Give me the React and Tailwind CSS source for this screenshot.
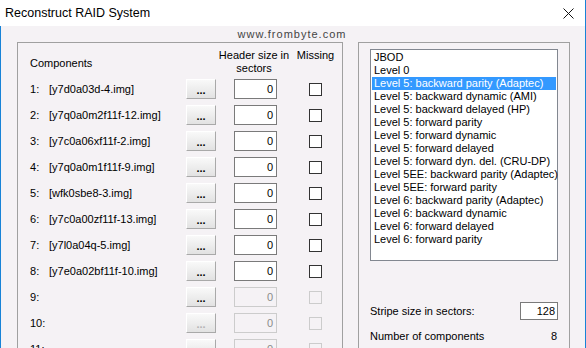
import React from 'react'

const FILES = [
  'y7d0a03d-4.img',
  'y7q0a0m2f11f-12.img',
  'y7c0a06xf11f-2.img',
  'y7q0a0m1f11f-9.img',
  'wfk0sbe8-3.img',
  'y7c0a00zf11f-13.img',
  'y7l0a04q-5.img',
  'y7e0a02bf11f-10.img',
]

const LEVELS = [
  'JBOD',
  'Level 0',
  'Level 5: backward parity (Adaptec)',
  'Level 5: backward dynamic (AMI)',
  'Level 5: backward delayed (HP)',
  'Level 5: forward parity',
  'Level 5: forward dynamic',
  'Level 5: forward delayed',
  'Level 5: forward dyn. del. (CRU-DP)',
  'Level 5EE: backward parity (Adaptec)',
  'Level 5EE: forward parity',
  'Level 6: backward parity (Adaptec)',
  'Level 6: backward dynamic',
  'Level 6: forward delayed',
  'Level 6: forward parity',
]

function DotsButton({ disabled }) {
  return (
    <div className="w-[30px] h-[20px] flex items-end justify-center pb-[3px] border border-t-white border-l-white border-r-[#a9a9a9] border-b-[#a9a9a9] bg-gradient-to-b from-[#f9f9f9] to-[#e2e2e2]">
      <span className={`text-[11px] leading-[9px] font-bold tracking-[0px] ${disabled ? 'text-[#b4b4b4]' : 'text-black'}`}>...</span>
    </div>
  )
}

function ComponentRow({ n, file, active, buttonOn }) {
  return (
    <div className="flex items-center h-[26px]">
      <span className="w-[19px]">{n}:</span>
      <span className="w-[137px] whitespace-nowrap">{file ? `[${file}]` : ''}</span>
      <DotsButton disabled={!buttonOn} />
      <div
        className={`ml-[18px] w-[43px] h-[20px] flex items-center justify-end pr-[3px] border ${
          active ? 'bg-white border-[#7a7a7a] text-black' : 'border-[#cccccc] text-[#8a8a8a]'
        }`}
      >
        0
      </div>
      <div className={`ml-[32px] w-[13px] h-[13px] border ${active ? 'bg-white border-[#333333]' : 'border-[#cccccc]'}`} />
    </div>
  )
}

export default function App() {
  const rows = Array.from({ length: 12 }, (_, i) => i + 1)

  return (
    <div className="w-[586px] h-[348px] overflow-hidden bg-[#f5f2f5] text-[11px] leading-[13px] text-black font-['Liberation_Sans',Arial,sans-serif] flex flex-col border-r border-[#1883d7]">
      {/* title bar */}
      <div className="h-[26px] shrink-0 bg-white flex items-center pl-[5px] pr-[11px]">
        <span className="text-[12.5px]">Reconstruct RAID System</span>
        <svg className="ml-auto" width="11" height="11" viewBox="0 0 11 11">
          <path d="M0.5 0.5 L10.5 10.5 M10.5 0.5 L0.5 10.5" stroke="#111" strokeWidth="1" fill="none" />
        </svg>
      </div>

      <div className="flex-1 flex flex-col border-l border-[#1883d7]">
        <div className="h-[16px] shrink-0 flex items-center justify-center pr-[2px] text-[#444] tracking-[1px]">
          www.frombyte.com
        </div>

        <div className="flex items-start">
          {/* components group */}
          <div className="ml-[16px] w-[326px] h-[320px] border border-[#a0a0a0] pl-[12px]">
            <div className="h-[33px] flex items-start">
              <span className="w-[184px] mt-[14px]">Components</span>
              <div className="w-[80px] mt-[6px] text-center">
                Header size in
                <br />
                sectors
              </div>
              <div className="w-[43px] mt-[6px] text-center">Missing</div>
            </div>
            {rows.map((n) => (
              <ComponentRow key={n} n={n} file={FILES[n - 1]} active={n <= 8} buttonOn={n <= 9} />
            ))}
          </div>

          {/* raid type group */}
          <div className="ml-[15px] w-[212px] h-[320px] border border-[#a0a0a0] pl-[11px] pr-[11px] pt-[6px]">
            <div className="w-[188px] h-[212px] bg-white border border-[#828790] py-[1px] px-[1px]">
              {LEVELS.map((l, i) => (
                <div
                  key={l}
                  className={`h-[13px] leading-[13px] pl-[2px] whitespace-nowrap ${i === 2 ? 'bg-[#3399ff] text-white' : ''}`}
                >
                  {l}
                </div>
              ))}
            </div>

            <div className="mt-[41px] h-[18px] flex items-center">
              <span>Stripe size in sectors:</span>
              <div className="ml-auto w-[38px] h-[18px] bg-white border border-[#7a7a7a] flex items-center justify-end pr-[2px]">
                128
              </div>
            </div>
            <div className="mt-[10px] flex items-center pr-[1px]">
              <span>Number of components</span>
              <span className="ml-auto">8</span>
            </div>
          </div>
        </div>
      </div>
    </div>
  )
}
